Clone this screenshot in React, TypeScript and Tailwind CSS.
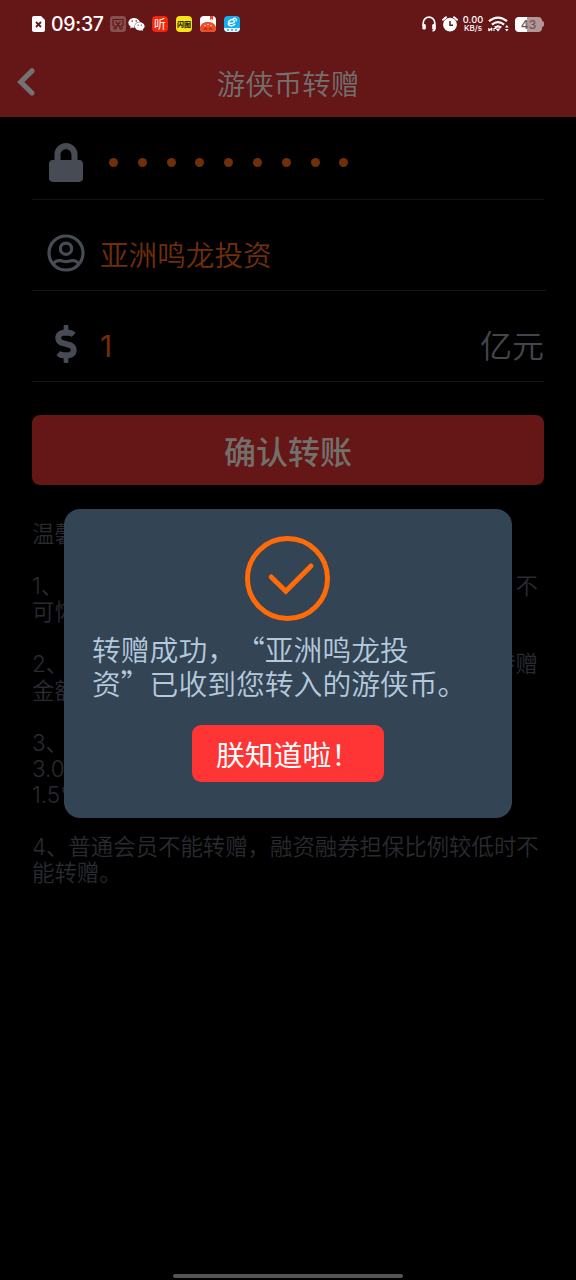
import type { ReactNode } from "react";
import { FaLock, FaDollarSign, FaWeixin } from "react-icons/fa";

const cjk = "font-['Noto_Sans_CJK_SC',sans-serif] [text-spacing-trim:space-all]";

function StatusBar() {
  return (
    <div className="flex h-12 items-center pl-8 pr-8 text-white">
      <svg className="h-4 w-[13px]" viewBox="0 0 13 16">
        <path d="M2 0h7l4 4v10a2 2 0 0 1-2 2H2a2 2 0 0 1-2-2V2a2 2 0 0 1 2-2z" fill="#fff" />
        <path d="M4 6l5 5M9 6l-5 5" stroke="#651717" strokeWidth="1.8" />
      </svg>
      <span className="ml-[6px] w-[53px] whitespace-nowrap font-['Inter',sans-serif] text-[19.5px] font-medium leading-6 tracking-[-0.3px]">
        09:37
      </span>
      <svg className="ml-[6px] h-4 w-4" viewBox="0 0 16 16">
        <rect width="16" height="16" rx="3" fill="#855050" />
        <path
          d="M5 9.500H3V3.500h10v6h-2M5.500 5.500l5 6M10.500 5.500l-5 6"
          fill="none"
          stroke="#651717"
          strokeWidth="1.200"
        />
        <circle cx="5" cy="12" r="1.300" fill="none" stroke="#651717" />
        <circle cx="11" cy="12" r="1.300" fill="none" stroke="#651717" />
      </svg>
      <FaWeixin className="ml-[2px] h-[17px] w-[17px]" />
      <span className={`ml-[7px] flex h-4 w-4 items-center justify-center rounded-[4px] bg-[#f5250a] text-[12px] leading-none ${cjk}`}>
        听
      </span>
      <span className={`ml-2 flex h-4 w-4 items-center justify-center rounded-[4px] bg-[#f8e514] ${cjk}`}>
        <span className="flex whitespace-nowrap text-[7px] font-black leading-none text-[#2c2810]">闪图</span>
      </span>
      <svg className="ml-2 h-4 w-4" viewBox="0 0 16 16">
        <rect width="16" height="16" rx="4" fill="#fff" />
        <path d="M0 11.500C1 7.500 4 6 8 6s7 1.500 8 5.500V12a4 4 0 0 1-4 4H4a4 4 0 0 1-4-4z" fill="#f04a25" />
        <path d="M10 0h3v4l-1.500-1L10 4z" fill="#f04a25" />
        <circle cx="5" cy="9.500" r=".7" fill="#fff" />
        <circle cx="8" cy="8.500" r=".7" fill="#fff" />
        <circle cx="11" cy="9.500" r=".7" fill="#fff" />
        <path d="M4 13.500q1.500-2.500 3 0M9 13.500q1.500-2.500 3 0" fill="none" stroke="#7c1e12" strokeWidth="1" />
      </svg>
      <svg className="ml-2 h-4 w-4" viewBox="0 0 16 16">
        <rect width="16" height="16" rx="4" fill="#16aef0" />
        <path d="M0 12h16a4 4 0 0 1-4 4H4a4 4 0 0 1-4-4z" fill="#e8f7ff" />
        <path
          d="M5 7.200C10 7.500 11 5.800 10 4.300 8.500 2.500 4.500 4 4.300 7.300c0 3 4 3.500 6.500 1M9.500 2.500c2-.8 3.500.5 2.500 2.500"
          fill="none"
          stroke="#fff"
          strokeWidth="1.300"
          strokeLinecap="round"
        />
        <path d="M3 14h2M7 14h2M11 14h2" stroke="#16aef0" strokeWidth="1.300" />
      </svg>

      <svg className="ml-auto h-4 w-[14px]" viewBox="0 0 14 16">
        <path d="M1.200 10V7a5.800 5.800 0 0 1 11.600 0v5.500q0 2-2.300 2.300" fill="none" stroke="#fff" strokeWidth="1.700" />
        <rect x=".4" y="8" width="3.400" height="5.600" rx="1.400" fill="#fff" />
        <rect x="10.200" y="8" width="3.400" height="5.600" rx="1.400" fill="#fff" />
      </svg>
      <svg className="ml-[6px] h-4 w-4" viewBox="0 0 16 16">
        <circle cx="8" cy="8.700" r="6.900" fill="#fff" />
        <path d="M1 3.800L4 1.200M15 3.800L12 1.200" stroke="#fff" strokeWidth="1.900" strokeLinecap="round" />
        <path d="M8 5v4.200h3" fill="none" stroke="#651717" strokeWidth="1.500" />
      </svg>
      <span className="ml-[5px] flex w-[20px] flex-col items-center whitespace-nowrap font-['Inter',sans-serif] font-medium">
        <span className="text-[9.3px] leading-[9px]">0.00</span>
        <span className="text-[8px] leading-[9px]">KB/s</span>
      </span>
      <svg className="ml-[5px] h-4 w-[21px]" viewBox="0 0 21 16">
        <path
          d="M1 5.200Q10 -2 19 5.200M3.900 8.600q6.100-5 12.200 0M6.800 11.700q3.200-2.600 6.400 0"
          fill="none"
          stroke="#fff"
          strokeWidth="2.200"
        />
        <path d="M7.500 12.500h5l-2.500 3z" fill="#fff" />
        <path d="M.8 12v3M3.800 12v3M.8 15l3-3M6 12v3M6 12.500h2" stroke="#fff" strokeWidth="1.100" />
        <path d="M17 11.500l1.800-2.500 1.800 2.500zM17 13l1.800 2.500 1.800-2.500z" fill="#fff" />
      </svg>
      <span className="ml-[6px] flex items-center">
        <span className="h-[15px] w-[27px] rounded-[4px] bg-[linear-gradient(90deg,#fff_43%,#b59696_43%)] text-center font-['Inter',sans-serif] text-[12px] font-medium leading-[15px] text-[#6b5757]">
          43
        </span>
        <span className="h-[6px] w-[2px] rounded-r bg-[#b59696]" />
      </span>
    </div>
  );
}

function Header() {
  return (
    <header className="h-[117px] bg-[#651717]">
      <StatusBar />
      <div className="grid h-[69px] grid-cols-[72px_1fr_72px] items-start">
        <svg className="ml-4 mt-[18px] h-8 w-6" viewBox="0 0 24 32">
          <path d="M16 4.800L4.800 16 16 27" fill="none" stroke="#737373" strokeWidth="5.200" strokeLinecap="round" />
        </svg>
        <h1 className={`pt-[14px] text-center text-[28.5px] font-[350] leading-[42px] text-[#737070] ${cjk}`}>
          游侠币转赠
        </h1>
      </div>
    </header>
  );
}

function Row({ icon, children, line }: { icon: ReactNode; children: ReactNode; line: string }) {
  return (
    <div className={`flex h-[91px] items-center border-b pt-[16px] ${line}`}>
      <span className="flex w-[68px] justify-center text-[#474c54]">{icon}</span>
      {children}
    </div>
  );
}

function Form() {
  return (
    <div className="mx-8 -mt-2">
      <Row line="border-[#12131c]" icon={<FaLock className="h-[39px] w-[34px]" />}>
        <span className="flex gap-[19.8px] pl-[9px]">
          {Array.from({ length: 9 }, (_, i) => (
            <i key={i} className="h-[9px] w-[9px] rounded-full bg-[#702f08]" />
          ))}
        </span>
      </Row>
      <Row
        line="border-[#15161a] -mr-[2px]"
        icon={
          <svg className="h-[38px] w-[38px]" viewBox="0 0 38 38" fill="none" stroke="currentColor" strokeWidth="3.200">
            <circle cx="19" cy="19" r="17" />
            <circle cx="19" cy="14.700" r="5.600" />
            <path d="M6.500 30.500Q7.500 26.500 13 26.500Q19 28.600 25 26.500Q30.500 26.500 31.500 30.500" />
          </svg>
        }
      >
        <span className={`pt-px text-[28.6px] font-[350] leading-10 text-[#702f08] ${cjk}`}>亚洲鸣龙投资</span>
      </Row>
      <Row line="border-[#15161a]" icon={<FaDollarSign className="h-[38px] w-[22px]" />}>
        <span className="flex-1 pt-[3px] font-['Inter',sans-serif] text-[30px] font-normal leading-10 text-[#702f08]">1</span>
        <span className={`text-[32px] font-[350] leading-10 text-[#43464d] ${cjk}`}>亿元</span>
      </Row>
      <button
        className={`mt-[33px] h-[70px] w-full rounded-[8px] bg-[#651717] text-[32px] font-medium leading-[70px] text-[#73706b] ${cjk}`}
      >
        确认转账
      </button>
    </div>
  );
}

const tips: string[][][] = [
  [["温馨"]],
  [["1、", "不"], ["可恢"]],
  [["2、", "转赠"], ["金额"]],
  [["3、"], ["3.0"], ["1.5%"]],
  [["4、普通会员不能转赠，融资融券担保比例较低时不"], ["能转赠。"]],
];

function Tips() {
  return (
    <div className="ml-8 mt-9 flex w-[506px] flex-col gap-[26.1px] whitespace-nowrap font-['Inter','Noto_Sans_CJK_SC',sans-serif] text-[22.4px] font-[350] leading-[26.1px] text-[#292b30] [text-spacing-trim:space-all]">
      {tips.map((group) => (
        <div key={group[0][0]}>
          {group.map((line) => (
            <p key={line[0]} className="flex h-[26.1px] justify-between">
              {line.map((part) => (
                <span key={part}>{part}</span>
              ))}
            </p>
          ))}
        </div>
      ))}
    </div>
  );
}

function Dialog() {
  return (
    <div
      role="dialog"
      className={`absolute left-16 top-[509px] flex h-[309px] w-[448px] flex-col items-center rounded-2xl bg-[#334454] pt-[27px] ${cjk}`}
    >
      <svg className="mr-px h-[85px] w-[85px]" viewBox="0 0 85 85" fill="none" stroke="#ff6b08" strokeWidth="5">
        <circle cx="42.500" cy="42.500" r="40" />
        <path d="M26.200 41L40.800 55.300 66 29.900" strokeLinecap="round" />
      </svg>
      <p className="mt-[11px] w-[392px] whitespace-nowrap text-[28.8px] font-[350] leading-[34px] text-[#b5c9dc]">
        转赠成功，“亚洲鸣龙投
        <br />
        资”已收到您转入的游侠币。
      </p>
      <button className="mt-[25px] h-[57px] w-[192px] whitespace-nowrap rounded-[9px] bg-[#ff3434] text-[28.8px] font-normal leading-[57px] text-white">
        朕知道啦！
      </button>
    </div>
  );
}

export default function App() {
  return (
    <div className="relative flex h-[1280px] w-[576px] flex-col overflow-hidden bg-black">
      <Header />
      <Form />
      <Tips />
      <Dialog />
      <div className="mx-auto mb-[2px] mt-auto h-[4px] w-[230px] rounded-full bg-[#555]" />
    </div>
  );
}
